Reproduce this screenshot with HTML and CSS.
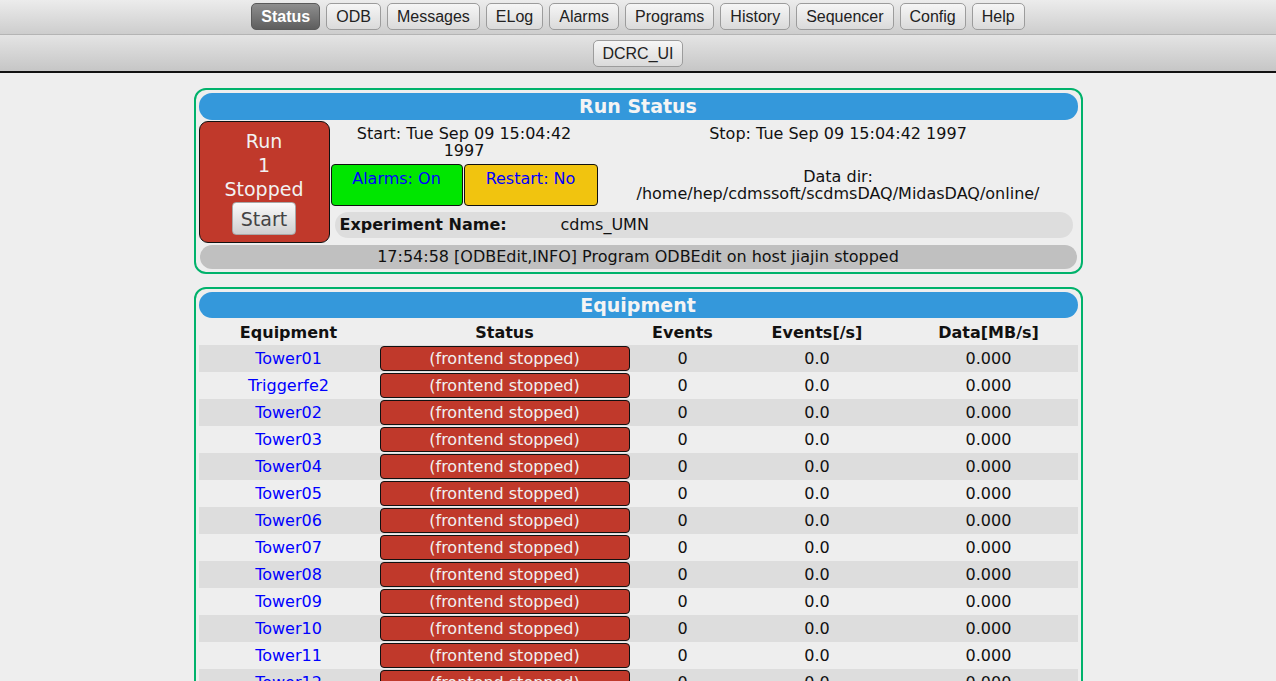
FILE: index.html
```html
<!DOCTYPE html>
<html>
<head>
<meta charset="utf-8">
<title>Status</title>
<link rel="stylesheet" href="styles.css">
</head>
<body>
<header class="nav">
  <div class="navbar navbar-main">
    <span class="nbtn nbtn-active">Status</span>
    <span class="nbtn">ODB</span>
    <span class="nbtn">Messages</span>
    <span class="nbtn">ELog</span>
    <span class="nbtn">Alarms</span>
    <span class="nbtn">Programs</span>
    <span class="nbtn">History</span>
    <span class="nbtn">Sequencer</span>
    <span class="nbtn">Config</span>
    <span class="nbtn">Help</span>
  </div>
  <div class="navbar navbar-sub">
    <span class="nbtn">DCRC_UI</span>
  </div>
</header>

<main class="content">
  <section class="mtable">
    <div class="mheader">Run Status</div>
    <div class="rsgrid">
      <div class="runcell">
        <div class="runline">Run</div>
        <div class="runline">1</div>
        <div class="runline">Stopped</div>
        <button class="startbtn">Start</button>
      </div>
      <div class="starttime">Start: Tue Sep 09 15:04:42<br>1997</div>
      <div class="stoptime">Stop: Tue Sep 09 15:04:42 1997</div>
      <div class="flag flag-alarms">Alarms: On</div>
      <div class="flag flag-restart">Restart: No</div>
      <div class="datadir">Data dir:<br>/home/hep/cdmssoft/scdmsDAQ/MidasDAQ/online/</div>
      <div class="expname"><span class="explabel">Experiment Name:</span><span class="expvalue">cdms_UMN</span></div>
    </div>
    <div class="msgbar">17:54:58 [ODBEdit,INFO] Program ODBEdit on host jiajin stopped</div>
  </section>

  <section class="mtable mtable-eq">
    <div class="mheader">Equipment</div>
    <table class="eqtable">
      <colgroup>
        <col class="c-eq"><col class="c-st"><col class="c-ev"><col class="c-evs"><col class="c-data">
      </colgroup>
      <thead>
        <tr><th>Equipment</th><th>Status</th><th>Events</th><th>Events[/s]</th><th>Data[MB/s]</th></tr>
      </thead>
      <tbody>
        <tr class="odd"><td><a href="#">Tower01</a></td><td><div class="fstat">(frontend stopped)</div></td><td>0</td><td>0.0</td><td>0.000</td></tr>
        <tr><td><a href="#">Triggerfe2</a></td><td><div class="fstat">(frontend stopped)</div></td><td>0</td><td>0.0</td><td>0.000</td></tr>
        <tr class="odd"><td><a href="#">Tower02</a></td><td><div class="fstat">(frontend stopped)</div></td><td>0</td><td>0.0</td><td>0.000</td></tr>
        <tr><td><a href="#">Tower03</a></td><td><div class="fstat">(frontend stopped)</div></td><td>0</td><td>0.0</td><td>0.000</td></tr>
        <tr class="odd"><td><a href="#">Tower04</a></td><td><div class="fstat">(frontend stopped)</div></td><td>0</td><td>0.0</td><td>0.000</td></tr>
        <tr><td><a href="#">Tower05</a></td><td><div class="fstat">(frontend stopped)</div></td><td>0</td><td>0.0</td><td>0.000</td></tr>
        <tr class="odd"><td><a href="#">Tower06</a></td><td><div class="fstat">(frontend stopped)</div></td><td>0</td><td>0.0</td><td>0.000</td></tr>
        <tr><td><a href="#">Tower07</a></td><td><div class="fstat">(frontend stopped)</div></td><td>0</td><td>0.0</td><td>0.000</td></tr>
        <tr class="odd"><td><a href="#">Tower08</a></td><td><div class="fstat">(frontend stopped)</div></td><td>0</td><td>0.0</td><td>0.000</td></tr>
        <tr><td><a href="#">Tower09</a></td><td><div class="fstat">(frontend stopped)</div></td><td>0</td><td>0.0</td><td>0.000</td></tr>
        <tr class="odd"><td><a href="#">Tower10</a></td><td><div class="fstat">(frontend stopped)</div></td><td>0</td><td>0.0</td><td>0.000</td></tr>
        <tr><td><a href="#">Tower11</a></td><td><div class="fstat">(frontend stopped)</div></td><td>0</td><td>0.0</td><td>0.000</td></tr>
        <tr class="odd"><td><a href="#">Tower12</a></td><td><div class="fstat">(frontend stopped)</div></td><td>0</td><td>0.0</td><td>0.000</td></tr>
      </tbody>
    </table>
  </section>
</main>
</body>
</html>
```

FILE: styles.css
```css
* { box-sizing: border-box; }

html, body {
  margin: 0;
  padding: 0;
}

body {
  background: #eeeeee;
  font-family: "DejaVu Sans", Verdana, sans-serif;
  font-size: 16px;
  color: #111;
}

/* ---------- navigation ---------- */
.navbar {
  display: flex;
  justify-content: center;
  gap: 6px;
  width: 100%;
}

.navbar-main {
  height: 35px;
  padding-top: 3px;
  background: linear-gradient(#ececec, #cdcdcd);
  border-bottom: 1px solid #b4b4b4;
}

.navbar-sub {
  height: 38px;
  padding-top: 5px;
  background: linear-gradient(#e4e4e4, #c6c6c6);
  border-bottom: 2px solid #111;
}

.nbtn {
  display: inline-block;
  height: 27px;
  padding: 0 9px;
  font-family: "Liberation Sans", Arial, sans-serif;
  font-size: 16px;
  line-height: 25px;
  color: #222;
  background: linear-gradient(#f6f6f6, #dadada);
  border: 1px solid #9c9c9c;
  border-radius: 5px;
}

.navbar-sub .nbtn {
  padding: 0 8px;
}

.nbtn-active {
  color: #fff;
  font-weight: bold;
  background: linear-gradient(#8e8e8e, #5e5e5e);
  border-color: #5a5a5a;
}

/* ---------- content ---------- */
.content {
  padding-top: 15px;
}

.mtable {
  width: 889px;
  margin: 0 auto;
  padding: 3px;
  border: 2px solid #00b26b;
  border-radius: 12px;
}

.mtable-eq {
  margin-top: 13px;
}

.mheader {
  height: 27px;
  line-height: 27px;
  background: #3498db;
  color: #f4f4f4;
  font-weight: bold;
  font-size: 19px;
  text-align: center;
  border-radius: 13px;
}

.mtable-eq .mheader {
  height: 26px;
  line-height: 26px;
}

/* ---------- run status ---------- */
.rsgrid {
  display: grid;
  grid-template-columns: 131px 132px 134px 1fr;
  grid-template-rows: 43px 42px 37px;
  column-gap: 1px;
  margin-top: 1px;
}

.runcell {
  grid-row: 1 / 4;
  grid-column: 1;
  display: flex;
  flex-direction: column;
  align-items: center;
  justify-content: center;
  background: #c0392b;
  border: 1px solid #111;
  border-radius: 9px;
  color: #f2f2f2;
  font-size: 19px;
}

.runline {
  line-height: 24px;
  height: 24px;
}

.startbtn {
  margin-top: 1px;
  height: 33px;
  padding: 0 8px;
  font-family: "DejaVu Sans", sans-serif;
  font-size: 19px;
  color: #444;
  background: linear-gradient(#fbfbfb, #cfcfcf);
  border: 1px solid #a8a8a8;
  border-radius: 4px;
}

.starttime {
  grid-row: 1;
  grid-column: 2 / 4;
  text-align: center;
  line-height: 17px;
  padding-top: 4px;
}

.stoptime {
  grid-row: 1;
  grid-column: 4;
  text-align: center;
  line-height: 17px;
  padding-top: 4px;
}

.flag {
  grid-row: 2;
  color: #0000ff;
  text-align: center;
  line-height: 17px;
  padding-top: 5px;
  border: 1px solid #111;
  border-radius: 4px;
}

.flag-alarms {
  grid-column: 2;
  background: #00e600;
}

.flag-restart {
  grid-column: 3;
  background: #f1c40f;
}

.datadir {
  grid-row: 2;
  grid-column: 4;
  display: flex;
  flex-direction: column;
  justify-content: center;
  text-align: center;
  line-height: 17px;
}

.expname {
  grid-row: 3;
  grid-column: 2 / 5;
  align-self: center;
  display: flex;
  align-items: center;
  height: 26px;
  margin: 0 5px 0 4px;
  padding-left: 5px;
  background: #dddddd;
  border-radius: 13px;
}

.explabel {
  width: 221px;
  font-weight: bold;
}

.msgbar {
  height: 24px;
  line-height: 24px;
  margin: 2px 1px 0;
  background: #c0c0c0;
  border-radius: 12px;
  text-align: center;
}

/* ---------- equipment ---------- */
.eqtable {
  width: 879px;
  border-collapse: collapse;
  table-layout: fixed;
}

.c-eq { width: 180px; }
.c-st { width: 252px; }
.c-ev { width: 104px; }
.c-evs { width: 165px; }
.c-data { width: 178px; }

.eqtable th {
  height: 27px;
  font-weight: bold;
  text-align: center;
  padding: 1px 0 0;
}

.eqtable td {
  height: 27px;
  padding: 0;
  text-align: center;
  vertical-align: middle;
}

.eqtable td:nth-child(2) {
  padding: 0 1px;
}

.eqtable tr.odd td {
  background: #dddddd;
}

.eqtable a {
  color: #0000ff;
  text-decoration: none;
}

.fstat {
  height: 25px;
  line-height: 23px;
  background: #c0392b;
  color: #f0f0f0;
  border: 1px solid #111;
  border-radius: 4px;
}
```
